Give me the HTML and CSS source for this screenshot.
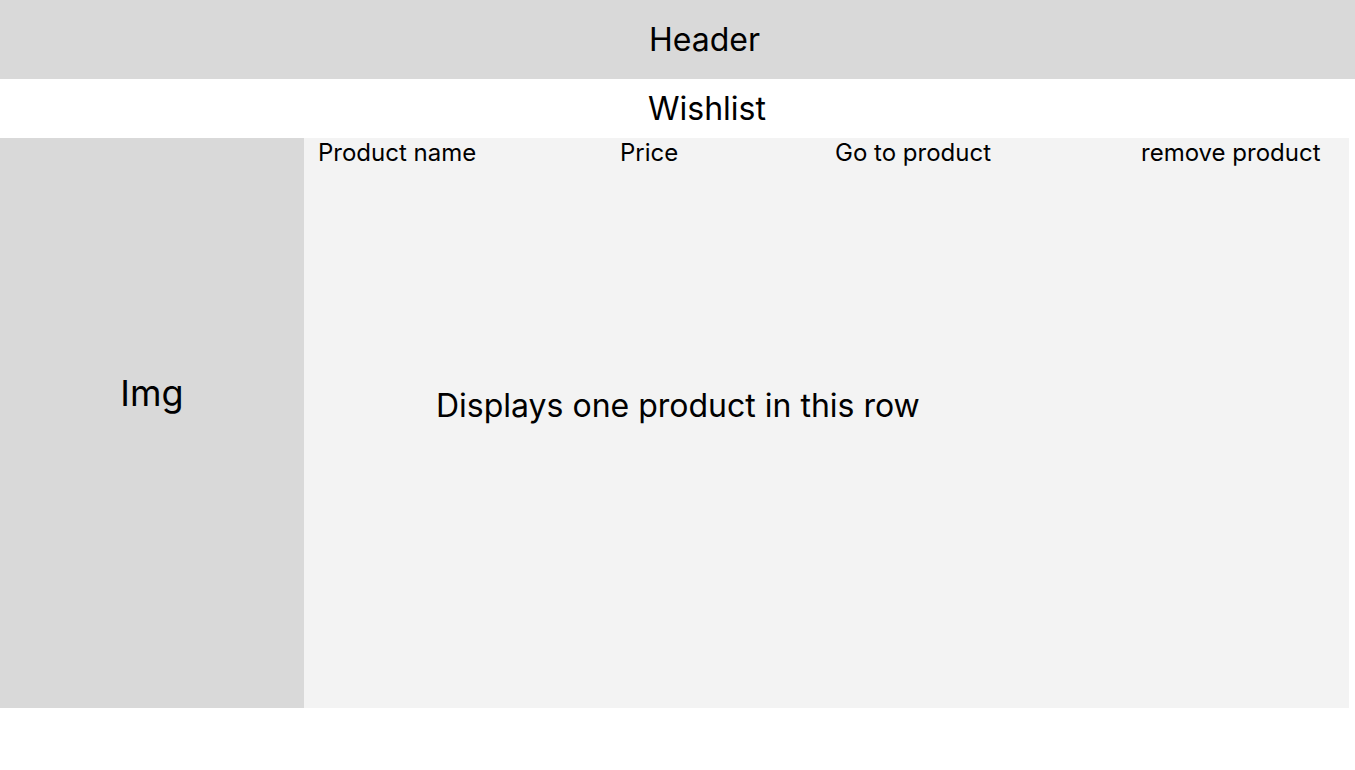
FILE: index.html
```html
<!DOCTYPE html>
<html lang="en">
<head>
<meta charset="utf-8">
<title>Wishlist</title>
<link rel="stylesheet" href="styles.css">
</head>
<body>
<header class="header">Header</header>
<h1 class="title">Wishlist</h1>
<section class="row">
  <div class="img">Img</div>
  <div class="panel">
    <div class="labels">
      <span>Product name</span>
      <span>Price</span>
      <span>Go to product</span>
      <span>remove product</span>
    </div>
    <div class="body">Displays one product in this row</div>
  </div>
</section>
</body>
</html>
```
FILE: styles.css
```css
* { box-sizing: border-box; }
body {
  margin: 0;
  font-family: Inter, "Noto Sans", sans-serif;
  color: #000;
  background: #fff;
}
.header {
  height: 79px;
  background: #d9d9d9;
  display: flex;
  align-items: center;
  justify-content: center;
  font-size: 32px;
  padding-left: 54px;
}
.title {
  margin: 0;
  height: 59px;
  display: flex;
  align-items: center;
  justify-content: center;
  font-size: 32px;
  font-weight: 400;
  padding-left: 59px;
}
.row {
  display: flex;
  height: 570px;
  width: 1349px;
}
.img {
  width: 304px;
  background: #d9d9d9;
  font-size: 36px;
  text-align: center;
  padding-top: 233px;
  line-height: 44px;
}
.panel {
  flex: 1;
  background: #f3f3f3;
  display: flex;
  flex-direction: column;
}
.labels {
  display: grid;
  grid-template-columns: 302px 215px 306px 1fr;
  padding-left: 14px;
  font-size: 24px;
  line-height: 29px;
}
.body {
  padding-left: 132px;
  margin-top: 220px;
  font-size: 32px;
  line-height: 38px;
}
```
